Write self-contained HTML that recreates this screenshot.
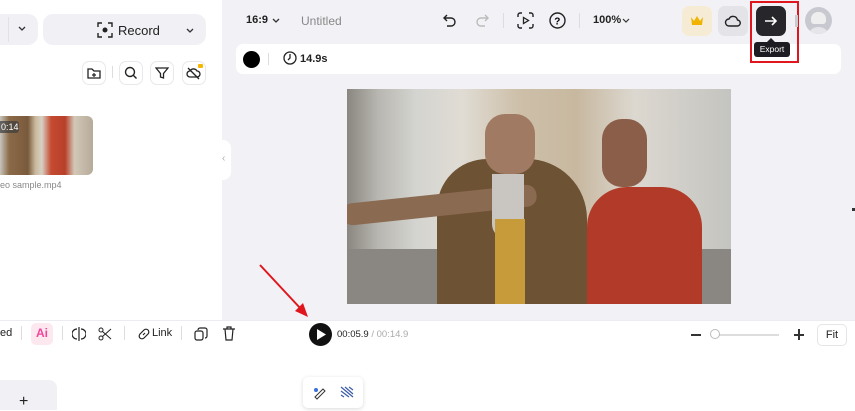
<!DOCTYPE html>
<html><head><style>
*{margin:0;padding:0;box-sizing:border-box}
body{width:855px;height:410px;overflow:hidden;font-family:"Liberation Sans",sans-serif;background:#fff;position:relative;color:#222}
.a{position:absolute}
.ib{position:absolute;width:24px;height:24px;border:1px solid #e8e8ec;border-radius:7px;background:#fff}
svg{position:absolute}
</style></head><body>
<!-- left panel -->
<div class="a" style="left:0;top:14px;width:38px;height:31px;background:#f1f1f5;border-radius:0 10px 10px 0"></div>
<div class="a" style="left:8px;top:17px;width:1px;height:25px;background:#e2e2e6"></div>
<svg style="left:18px;top:26px" width="8" height="6"><path d="M1 1l3 3 3-3" stroke="#333" fill="none" stroke-width="1.3"/></svg>
<div class="a" style="left:43px;top:14px;width:163px;height:31px;background:#f1f1f5;border-radius:10px"></div>
<svg style="left:97px;top:22px" width="16" height="16"><path d="M1 5V1h4M11 1h4v4M15 11v4h-4M5 15H1v-4" stroke="#222" fill="none" stroke-width="1.4"/><circle cx="8" cy="8" r="2.5" fill="#222"/></svg>
<div class="a" style="left:118px;top:23px;font-size:13px">Record</div>
<svg style="left:186px;top:28px" width="8" height="6"><path d="M1 1l3 3 3-3" stroke="#333" fill="none" stroke-width="1.3"/></svg>
<div class="ib" style="left:82px;top:61px"></div>
<svg style="left:87px;top:66px" width="14" height="14"><path d="M1 3h4l2 2h6v7H1z" stroke="#222" fill="none" stroke-width="1.3"/><path d="M7 7v4M5 9h4" stroke="#222" stroke-width="1.2"/></svg>
<div class="a" style="left:112px;top:66px;width:1px;height:12px;background:#ddd"></div>
<div class="ib" style="left:119px;top:61px"></div>
<svg style="left:124px;top:66px" width="14" height="14"><circle cx="6" cy="6" r="4.5" stroke="#222" fill="none" stroke-width="1.4"/><path d="M9.5 9.5l3 3" stroke="#222" stroke-width="1.4"/></svg>
<div class="ib" style="left:150px;top:61px"></div>
<svg style="left:155px;top:66px" width="14" height="14"><path d="M1 2h12L8.5 7.5V12L5.5 11V7.5z" stroke="#222" fill="none" stroke-width="1.3"/></svg>
<div class="ib" style="left:182px;top:61px"></div>
<svg style="left:186px;top:66px" width="16" height="14"><path d="M4 11a3 3 0 010-6 4 4 0 017 0 3 3 0 010 6z" stroke="#222" fill="none" stroke-width="1.3"/><path d="M2 2l11 11" stroke="#222" stroke-width="1.3"/></svg>
<div class="a" style="left:198px;top:64px;width:5px;height:4px;background:#f5b800;border-radius:1px"></div>
<div class="a" style="left:0;top:116px;width:93px;height:59px;border-radius:0 6px 6px 0;overflow:hidden;background:linear-gradient(90deg,#c8c4bc 0%,#8a6a48 10%,#7a5a3c 30%,#c9b89c 38%,#d8d0c4 45%,#c44a30 55%,#b8402a 70%,#d2c8b8 80%,#b6aa98 100%)"></div>
<div class="a" style="left:0;top:121px;width:19px;height:12px;background:rgba(60,60,60,.7);color:#fff;font-size:9px;padding:1px 0 0 1px;border-radius:0 3px 3px 0">0:14</div>
<div class="a" style="left:0;top:180px;font-size:9px;color:#888">eo sample.mp4</div>
<!-- right area -->
<div class="a" style="left:222px;top:0;width:633px;height:320px;background:#f2f2f6"></div>
<div class="a" style="left:221px;top:140px;width:10px;height:40px;background:#fff;border-radius:0 8px 8px 0"></div>
<div class="a" style="left:222px;top:153px;font-size:10px;color:#aaa">‹</div>
<div class="a" style="left:246px;top:14px;font-size:11px;font-weight:bold">16:9</div>
<svg style="left:272px;top:18px" width="8" height="6"><path d="M1 1l3 3 3-3" stroke="#333" fill="none" stroke-width="1.3"/></svg>
<div class="a" style="left:301px;top:14px;font-size:12px;color:#888">Untitled</div>
<svg style="left:442px;top:13px" width="16" height="14"><path d="M5 2L2 5l3 3M2 5h7a4 4 0 010 8H5" stroke="#222" fill="none" stroke-width="1.4"/></svg>
<svg style="left:474px;top:13px" width="16" height="14"><path d="M11 2l3 3-3 3M14 5H7a4 4 0 000 8h4" stroke="#bbb" fill="none" stroke-width="1.4"/></svg>
<div class="a" style="left:503px;top:13px;width:1px;height:15px;background:#ddd"></div>
<svg style="left:517px;top:12px" width="17" height="17"><path d="M1 5V3a2 2 0 012-2h2M12 1h2a2 2 0 012 2v2M16 12v2a2 2 0 01-2 2h-2M5 16H3a2 2 0 01-2-2v-2" stroke="#222" fill="none" stroke-width="1.4"/><path d="M6.5 5.5v6l5-3z" stroke="#222" fill="none" stroke-width="1.3"/></svg>
<svg style="left:549px;top:12px" width="17" height="17"><circle cx="8.5" cy="8.5" r="7.5" stroke="#222" fill="none" stroke-width="1.4"/><text x="5.3" y="12.5" font-size="10" font-weight="bold" font-family="Liberation Sans">?</text></svg>
<div class="a" style="left:579px;top:13px;width:1px;height:15px;background:#ddd"></div>
<div class="a" style="left:593px;top:14px;font-size:11px;font-weight:bold">100%</div>
<svg style="left:622px;top:18px" width="8" height="6"><path d="M1 1l3 3 3-3" stroke="#333" fill="none" stroke-width="1.2"/></svg>
<div class="a" style="left:682px;top:6px;width:30px;height:30px;background:#f6ecd6;border-radius:7px"></div>
<svg style="left:690px;top:15px" width="14" height="11"><path d="M1 2l3 4 3-5 3 5 3-4-1 8H2z" fill="#f0b400"/></svg>
<div class="a" style="left:718px;top:6px;width:30px;height:30px;background:#e3e3e8;border-radius:7px"></div>
<svg style="left:724px;top:14px" width="18" height="14"><path d="M5 12a3.5 3.5 0 010-7 4.5 4.5 0 018.5 1A3 3 0 0113 12z" stroke="#222" fill="none" stroke-width="1.4"/></svg>
<div class="a" style="left:236px;top:44px;width:605px;height:30px;background:#fff;border-radius:7px"></div>
<div class="a" style="left:243px;top:51px;width:17px;height:17px;background:#000;border-radius:50%"></div>
<div class="a" style="left:268px;top:53px;width:1px;height:12px;background:#ddd"></div>
<svg style="left:283px;top:51px" width="14" height="14"><circle cx="7" cy="7" r="6" stroke="#222" fill="none" stroke-width="1.3"/><path d="M7 3v4l-2 2" stroke="#222" fill="none" stroke-width="1.3"/></svg>
<div class="a" style="left:300px;top:53px;font-size:11px;font-weight:bold">14.9s</div>
<div class="a" style="left:756px;top:6px;width:30px;height:30px;background:#26262b;border-radius:7px"></div>
<svg style="left:764px;top:15px" width="14" height="12"><path d="M1 6h11M8 2l4 4-4 4" stroke="#fff" fill="none" stroke-width="1.6"/></svg>
<div class="a" style="left:767px;top:38px;width:0;height:0;border:4px solid transparent;border-bottom-color:#1c1c22;border-top:0"></div>
<div class="a" style="left:754px;top:42px;width:36px;height:15px;background:#1c1c22;border-radius:3px;color:#fff;font-size:8.5px;text-align:center;line-height:15px">Export</div>
<div class="a" style="left:750px;top:1px;width:49px;height:62px;border:2px solid #e0161e"></div>
<div class="a" style="left:795px;top:15px;width:3px;height:12px;background:#ccc"></div>
<div class="a" style="left:805px;top:7px;width:27px;height:27px;border-radius:50%;background:#c8c8d0;overflow:hidden"><div class="a" style="left:6px;top:5px;width:15px;height:12px;border-radius:7px 7px 3px 3px;background:#eee"></div><div class="a" style="left:3px;top:20px;width:21px;height:10px;border-radius:10px 10px 0 0;background:#e5e5ea"></div></div>
<!-- video -->
<div class="a" style="left:347px;top:89px;width:384px;height:215px;overflow:hidden;background:linear-gradient(90deg,#8a8680 0%,#b8b6b0 8%,#d4d4d0 18%,#e0dcd4 30%,#cdbfa8 45%,#c8b8a0 60%,#dcd8d0 75%,#c4c4c0 100%)">
<div class="a" style="left:0;top:160px;width:384px;height:55px;background:#8a8682"></div>
<div class="a" style="left:90px;top:70px;width:150px;height:145px;border-radius:50px 60px 0 0;background:#6e5234"></div>
<div class="a" style="left:-5px;top:105px;width:195px;height:22px;border-radius:10px;background:#8a6a50;transform:rotate(-6deg)"></div>
<div class="a" style="left:138px;top:25px;width:50px;height:60px;border-radius:20px;background:#a07a62"></div>
<div class="a" style="left:145px;top:85px;width:32px;height:65px;border-radius:0 0 15px 15px;background:#c9c5c0"></div>
<div class="a" style="left:148px;top:130px;width:30px;height:85px;background:#c79a3a"></div>
<div class="a" style="left:240px;top:98px;width:115px;height:117px;border-radius:40px 40px 0 0;background:#b23a28"></div>
<div class="a" style="left:255px;top:30px;width:45px;height:68px;border-radius:20px;background:#8a5e48"></div>
</div>
<!-- red arrow -->
<svg style="left:255px;top:262px" width="60" height="60"><path d="M5 3L46 47" stroke="#e0161e" stroke-width="2"/><path d="M53 55L40 49l8-8z" fill="#e0161e"/></svg>
<!-- bottom toolbar -->
<div class="a" style="left:0;top:320px;width:855px;height:1px;background:#ececf0"></div>
<div class="a" style="left:0;top:327px;font-size:11px">ed</div>
<div class="a" style="left:21px;top:326px;width:1px;height:14px;background:#ddd"></div>
<div class="a" style="left:31px;top:323px;width:22px;height:22px;background:#fde8ef;border-radius:5px;color:#f0479b;font-size:12px;font-weight:bold;padding:3px 0 0 5px">Ai</div>
<div class="a" style="left:62px;top:326px;width:1px;height:14px;background:#ddd"></div>
<svg style="left:72px;top:327px" width="14" height="14"><path d="M5 2a5 5 0 000 10M9 2a5 5 0 010 10M7 0v14" stroke="#222" fill="none" stroke-width="1.2"/></svg>
<svg style="left:98px;top:327px" width="14" height="14"><circle cx="3" cy="3" r="2" stroke="#222" fill="none"/><circle cx="3" cy="11" r="2" stroke="#222" fill="none"/><path d="M4.5 4.5L13 12M4.5 9.5L13 2" stroke="#222"/></svg>
<div class="a" style="left:124px;top:326px;width:1px;height:14px;background:#ddd"></div>
<svg style="left:137px;top:327px" width="14" height="14"><path d="M6 8l2-2M5 5l2-2a2.5 2.5 0 014 4l-2 2M9 9l-2 2a2.5 2.5 0 01-4-4l2-2" stroke="#222" fill="none" stroke-width="1.2"/></svg>
<div class="a" style="left:152px;top:327px;font-size:11px">Link</div>
<div class="a" style="left:181px;top:326px;width:1px;height:14px;background:#ddd"></div>
<svg style="left:194px;top:327px" width="14" height="14"><rect x="1" y="4" width="8" height="9" rx="2" stroke="#222" fill="none" stroke-width="1.2"/><path d="M4 3a2 2 0 012-2h5a2 2 0 012 2v6a2 2 0 01-2 2" stroke="#222" fill="none" stroke-width="1.2"/></svg>
<svg style="left:222px;top:326px" width="14" height="15"><path d="M1 3h12M5 3V1h4v2M3 3l1 11h6l1-11" stroke="#222" fill="none" stroke-width="1.2"/></svg>
<div class="a" style="left:309px;top:323px;width:23px;height:23px;background:#111;border-radius:50%"></div>
<svg style="left:317px;top:329px" width="9" height="11"><path d="M0 0l9 5.5L0 11z" fill="#fff"/></svg>
<div class="a" style="left:337px;top:329px;font-size:9.5px">00:05.9 <span style="color:#aaa">/ 00:14.9</span></div>
<div class="a" style="left:691px;top:334px;width:10px;height:1.5px;background:#333"></div>
<div class="a" style="left:713px;top:334px;width:66px;height:1.5px;background:#ddd"></div>
<div class="a" style="left:710px;top:329px;width:10px;height:10px;border:1px solid #bbb;border-radius:50%;background:#fff"></div>
<div class="a" style="left:794px;top:334px;width:10px;height:1.5px;background:#333"></div>
<div class="a" style="left:798px;top:329px;width:1.5px;height:11px;background:#333"></div>
<div class="a" style="left:817px;top:324px;width:30px;height:22px;border:1px solid #e5e5e8;border-radius:5px;font-size:11px;text-align:center;line-height:20px">Fit</div>
<div class="a" style="left:0;top:380px;width:57px;height:30px;background:#f1f1f5;border-radius:0 8px 0 0"></div>
<div class="a" style="left:19px;top:393px;font-size:16px">+</div>
<div class="a" style="left:303px;top:377px;width:60px;height:31px;background:#fff;border-radius:5px;box-shadow:0 1px 4px rgba(0,0,0,.15)"></div>
<svg style="left:312px;top:385px" width="14" height="15"><path d="M3 12l8-8 2 2-8 8z" stroke="#333" fill="none"/><circle cx="4" cy="5" r="2" fill="#3a6fd8"/></svg>
<svg style="left:340px;top:386px" width="14" height="12"><path d="M1 1l12 10M5 1l8 7M1 5l8 6M9 1l4 3M1 9l3 2" stroke="#3a5aa8" stroke-width="1.2"/></svg>
<div class="a" style="left:852px;top:208px;width:3px;height:3px;background:#333"></div>
</body></html>
